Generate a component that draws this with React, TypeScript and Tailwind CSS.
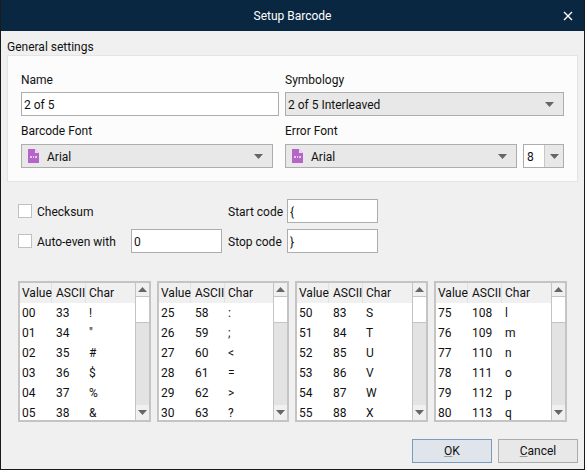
import React from "react";

const FONT = "font-['Roboto','Noto_Sans',sans-serif]";

function Arrow({ up = false }: { up?: boolean }) {
  return (
    <svg width="9" height="5" viewBox="0 0 9 5" className="block">
      <path d={up ? "M4.5 0 L9 5 L0 5 Z" : "M0 0 L9 0 L4.5 5 Z"} fill="#666" />
    </svg>
  );
}

function FontIcon() {
  return (
    <svg width="11" height="14" viewBox="0 0 11 14" className="block shrink-0">
      <path d="M0 0 H7 L11 4 V14 H0 Z" fill="#b565c9" />
      <path d="M7 0 L11 4 H7 Z" fill="#efdcf4" />
      <path d="M2 7 H4 V9 H2 Z M5 7 H6 V9 H5 Z M7 7 H9 V9 H7 Z" fill="#e6cdec" />
    </svg>
  );
}

function Combo({ text, icon, className }: { text: string; icon?: boolean; className: string }) {
  return (
    <div className={`h-6 border border-[#adadad] bg-[#e8e8e8] flex items-center pr-[9px] ${icon ? "pl-[6px]" : "pl-[2px]"} ${className}`}>
      {icon && <FontIcon />}
      <span className={`${icon ? "ml-[8px]" : ""} flex-1 text-[#111] pt-px`}>{text}</span>
      <Arrow />
    </div>
  );
}

function Input({ text, className }: { text: string; className: string }) {
  return (
    <div className={`h-6 border border-[#adadad] bg-white flex items-center pl-[2px] pt-px text-[#111] ${className}`}>{text}</div>
  );
}

function ListTable({ rows, className = "" }: { rows: [string, string, string][]; className?: string }) {
  return (
    <div className={`h-[141px] border-2 border-[#c4c4c4] bg-white flex ${className}`}>
      <div className="flex-1 min-w-0 overflow-hidden">
        <div className="h-5 bg-[#f0f0f0] flex items-center">
          <span className="w-[32px] pl-[2px] border-r border-[#e2e2e2] leading-5">Value</span>
          <span className="w-[34px] pl-[4px] border-r border-[#e2e2e2] leading-5">ASCII</span>
          <span className="pl-[3px]">Char</span>
        </div>
        {rows.map((r) => (
          <div key={r[0]} className="h-5 flex items-center">
            <span className="w-[32px] pl-[2px]">{r[0]}</span>
            <span className="w-[34px] pl-[4px]">{r[1]}</span>
            <span className="pl-[3px]">{r[2]}</span>
          </div>
        ))}
      </div>
      <div className="w-[14px] shrink-0 bg-[#e3e3e3] border-l border-[#c4c4c4] flex flex-col">
        <div className="h-[14px] bg-[#f0f0f0] flex items-center justify-center border-b border-[#c4c4c4]"><Arrow up /></div>
        <div className="h-[26px] bg-white border-b border-[#c4c4c4]" />
        <div className="flex-1" />
        <div className="h-[15px] bg-[#f0f0f0] flex items-center justify-center"><Arrow /></div>
      </div>
    </div>
  );
}

const t1: [string, string, string][] = [["00","33","!"],["01","34","\""],["02","35","#"],["03","36","$"],["04","37","%"],["05","38","&"]];
const t2: [string, string, string][] = [["25","58",":"],["26","59",";"],["27","60","<"],["28","61","="],["29","62",">"],["30","63","?"]];
const t3: [string, string, string][] = [["50","83","S"],["51","84","T"],["52","85","U"],["53","86","V"],["54","87","W"],["55","88","X"]];
const t4: [string, string, string][] = [["75","108","l"],["76","109","m"],["77","110","n"],["78","111","o"],["79","112","p"],["80","113","q"]];

export default function App() {
  return (
    <div className={`w-[585px] h-[470px] bg-[#f0f0f0] border border-[#1a1a1a] border-t-[#0a2742] flex flex-col text-[12px] leading-4 text-[#111] overflow-hidden ${FONT}`}>
      <div className="h-[30px] shrink-0 bg-[#0a2742] text-white flex items-center justify-center relative">
        <span>Setup Barcode</span>
        <svg width="10" height="10" viewBox="0 0 10 10" className="absolute right-[11px] top-[10px]">
          <path d="M1 1 L9 9 M9 1 L1 9" stroke="#fff" strokeWidth="1.4" />
        </svg>
      </div>

      <div className="pl-[6px] pt-[8px] h-[16px] box-content leading-4">General settings</div>

      <div className="ml-[6px] w-[571px] h-[127px] bg-[#fcfcfc] border border-[#e4e4e4] pl-[13px] pr-[12px] pt-[15px] flex flex-col">
        <div className="flex gap-[6px]">
          <div className="w-[258px]">
            <div className="h-4 mb-[5px] pt-px">Name</div>
            <Input text="2 of 5" className="w-[258px]" />
          </div>
          <div className="w-[279px]">
            <div className="h-4 mb-[5px] pt-px">Symbology</div>
            <Combo text="2 of 5 Interleaved" className="w-[279px]" />
          </div>
        </div>
        <div className="flex gap-[12px] mt-[6px]">
          <div className="w-[252px]">
            <div className="h-4 mb-[6px] pt-px">Barcode Font</div>
            <Combo text="Arial" icon className="w-[252px]" />
          </div>
          <div className="w-[279px]">
            <div className="h-4 mb-[6px] pt-px">Error Font</div>
            <div className="flex gap-[6px]">
              <Combo text="Arial" icon className="w-[232px]" />
              <div className="w-[41px] h-6 border border-[#adadad] bg-[#e8e8e8] flex items-center">
                <div className="w-[20px] h-full bg-white pl-[3px] pt-px flex items-center">8</div>
                <div className="flex-1 flex justify-center border-l border-[#c8c8c8] h-full items-center"><Arrow /></div>
              </div>
            </div>
          </div>
        </div>
      </div>

      <div className="ml-[17px] mt-[17px] flex">
        <div className="w-[210px] flex flex-col gap-[6px]">
          <div className="h-6 flex items-center">
            <div className="w-[14px] h-[14px] border border-[#c0c0c0] bg-white" />
            <span className="ml-[5px] pt-px">Checksum</span>
          </div>
          <div className="h-6 flex items-center">
            <div className="w-[14px] h-[14px] border border-[#c0c0c0] bg-white" />
            <span className="ml-[5px] w-[94px] pt-px">Auto-even with</span>
            <Input text="0" className="w-[91px]" />
          </div>
        </div>
        <div className="flex flex-col gap-[6px]">
          <div className="h-6 flex items-center">
            <span className="w-[59px] pt-px">Start code</span>
            <Input text="{" className="w-[91px]" />
          </div>
          <div className="h-6 flex items-center">
            <span className="w-[59px] pt-px">Stop code</span>
            <Input text="}" className="w-[91px]" />
          </div>
        </div>
      </div>

      <div className="ml-[17px] mt-[28px] flex">
        <ListTable rows={t1} className="w-[133px] mr-[6px]" />
        <ListTable rows={t2} className="w-[132px] mr-[6px]" />
        <ListTable rows={t3} className="w-[133px] mr-[6px]" />
        <ListTable rows={t4} className="w-[133px]" />
      </div>

      <div className="mt-[17px] ml-[411px] flex gap-[6px]">
        <button className="w-[80px] h-6 border border-[#7a9cbc] bg-[#dfe5ea] text-[#111]"><span className="underline decoration-[#999]">O</span>K</button>
        <button className="w-[80px] h-6 border border-[#adadad] bg-[#e8e8e8] text-[#111]"><span className="underline decoration-[#999]">C</span>ancel</button>
      </div>
    </div>
  );
}
